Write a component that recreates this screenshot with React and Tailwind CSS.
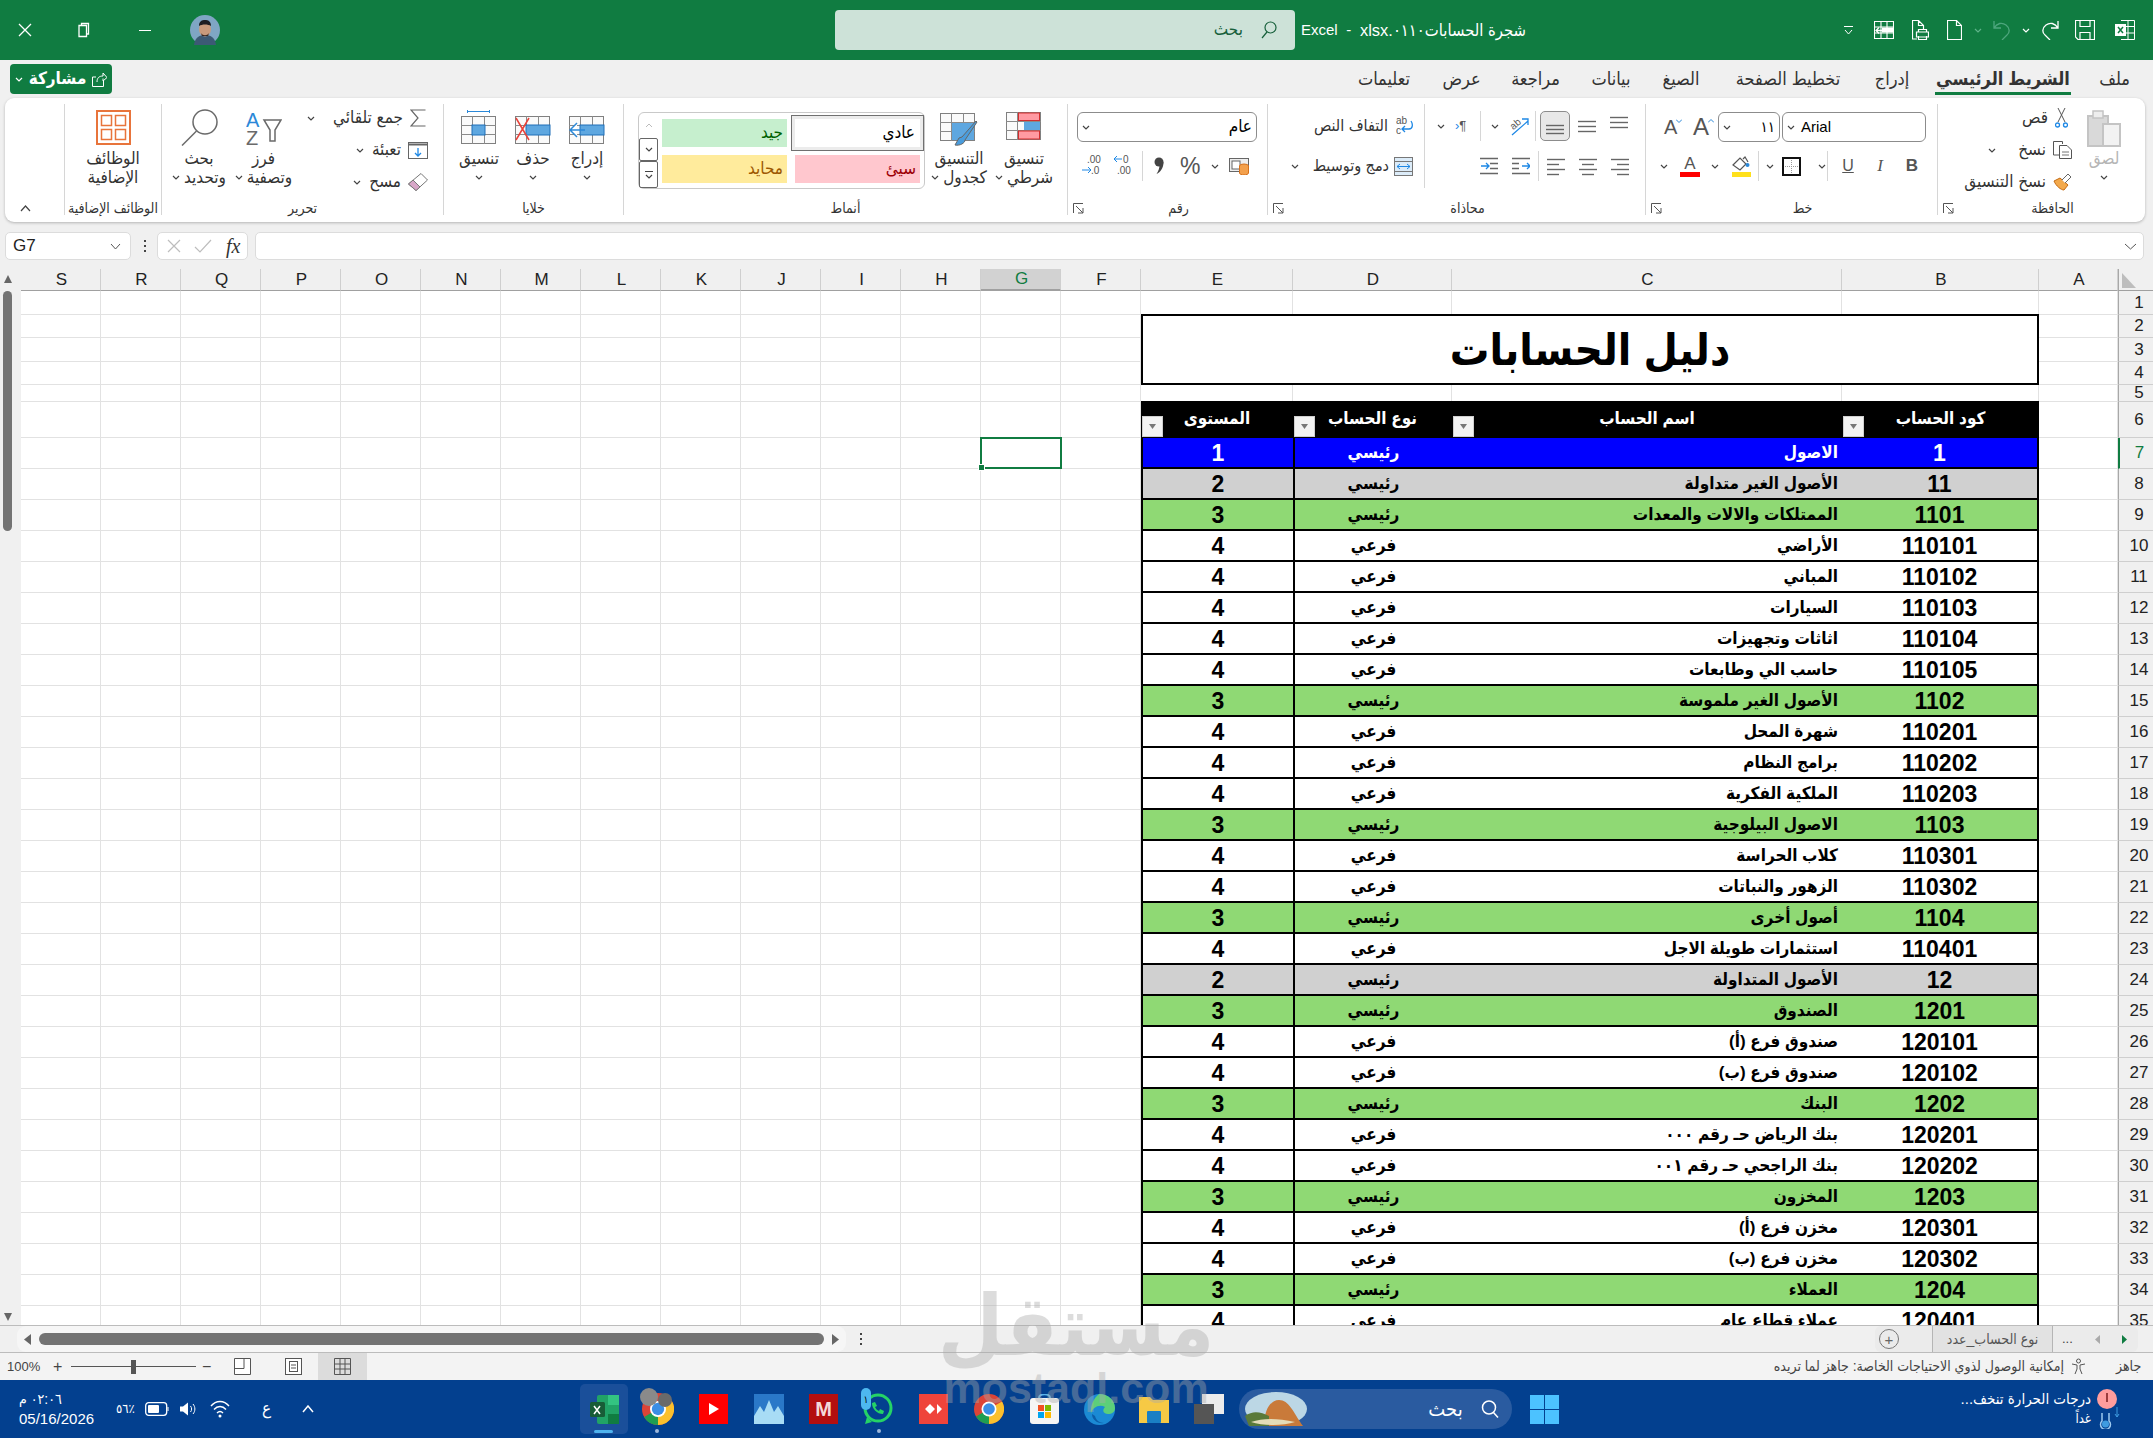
import React from "react";

const COLS = ["S", "R", "Q", "P", "O", "N", "M", "L", "K", "J", "I", "H", "G", "F", "E", "D", "C", "B", "A"];
const EMPTY = Array.from({ length: 14 }, (_, i) => i);

// type: b = blue, g = grey, m = green, s = plain
const ACCOUNTS = [
  ["1", "الاصول", "رئيسي", 1, "b"],
  ["11", "الأصول الغير متداولة", "رئيسي", 2, "g"],
  ["1101", "الممتلكات والالات والمعدات", "رئيسي", 3, "m"],
  ["110101", "الأراضي", "فرعي", 4, "s"],
  ["110102", "المباني", "فرعي", 4, "s"],
  ["110103", "السيارات", "فرعي", 4, "s"],
  ["110104", "اثاثات وتجهيزات", "فرعي", 4, "s"],
  ["110105", "حاسب الي وطابعات", "فرعي", 4, "s"],
  ["1102", "الأصول الغير ملموسة", "رئيسي", 3, "m"],
  ["110201", "شهرة المحل", "فرعي", 4, "s"],
  ["110202", "برامج النظام", "فرعي", 4, "s"],
  ["110203", "الملكية الفكرية", "فرعي", 4, "s"],
  ["1103", "الاصول البيلوجية", "رئيسي", 3, "m"],
  ["110301", "كلاب الحراسة", "فرعي", 4, "s"],
  ["110302", "الزهور والنباتات", "فرعي", 4, "s"],
  ["1104", "أصول أخرى", "رئيسي", 3, "m"],
  ["110401", "استثمارات طويلة الاجل", "فرعي", 4, "s"],
  ["12", "الأصول المتداولة", "رئيسي", 2, "g"],
  ["1201", "الصندوق", "رئيسي", 3, "m"],
  ["120101", "صندوق فرع (أ)", "فرعي", 4, "s"],
  ["120102", "صندوق فرع (ب)", "فرعي", 4, "s"],
  ["1202", "البنك", "رئيسي", 3, "m"],
  ["120201", "بنك الرياض حـ رقم ٠٠٠", "فرعي", 4, "s"],
  ["120202", "بنك الراجحي حـ رقم ٠٠١", "فرعي", 4, "s"],
  ["1203", "المخزون", "رئيسي", 3, "m"],
  ["120301", "مخزن فرع (أ)", "فرعي", 4, "s"],
  ["120302", "مخزن فرع (ب)", "فرعي", 4, "s"],
  ["1204", "العملاء", "رئيسي", 3, "m"],
  ["120401", "عملاء قطاع عام", "فرعي", 4, "s"],
];

const FILLS = {
  b: "bg-[#0000ff] text-white",
  g: "bg-[#d0d0d0] text-black",
  m: "bg-[#8fd974] text-black",
  s: "bg-white text-black",
};

const TABS = [
  ["تعليمات", "ml-[1246px] w-[52px]"],
  ["عرض", "ml-[33px] w-[37px]"],
  ["مراجعة", "ml-[32px] w-[47px]"],
  ["بيانات", "ml-[32px] w-[40px]"],
  ["الصيغ", "ml-[31px] w-[38px]"],
  ["تخطيط الصفحة", "ml-[36px] w-[104px]"],
  ["إدراج", "ml-[36px] w-[32px]"],
];

function Chev({ className = "", color = "#444" }) {
  return (
    <svg width="8" height="5" viewBox="0 0 8 5" className={`shrink-0 ${className}`}>
      <path d="M1 1l3 3 3-3" fill="none" stroke={color} strokeWidth="1.2" />
    </svg>
  );
}

function Launcher() {
  return (
    <svg width="11" height="11" viewBox="0 0 11 11" className="ml-[5px] mr-[6px] shrink-0">
      <path d="M.5 10V.5H10M3 3l7 7M10 5v5H5" fill="none" stroke="#555" />
    </svg>
  );
}

function Sep({ className = "" }) {
  return <div className={`h-[30px] w-px shrink-0 bg-[#d6d6d6] ${className}`} />;
}

function Group({ label, launcher, className = "", children }) {
  return (
    <div className={`flex h-[111px] shrink-0 flex-col border-l border-[#d6d6d6] ${className}`}>
      <div className="flex min-h-0 flex-1">{children}</div>
      <div className="flex h-[14px] items-center">
        {launcher && <Launcher />}
        <span dir="rtl" className="flex-1 text-center text-[14px] leading-[14px] whitespace-nowrap text-[#333]">
          {label}
        </span>
      </div>
    </div>
  );
}

function Big({ className = "", icon, l1, l2, chev }) {
  return (
    <div className={`flex shrink-0 flex-col items-center text-[17px] text-[#333] ${className}`}>
      <div className="flex h-[45px] items-center justify-center">{icon}</div>
      <div dir="rtl" className="h-[19px] leading-[19px] whitespace-nowrap">{l1}</div>
      <div className="flex h-[19px] items-center gap-[4px] whitespace-nowrap">
        {chev && <Chev />}
        {l2 && <span dir="rtl" className="leading-[19px]">{l2}</span>}
      </div>
    </div>
  );
}

function Small({ icon, text, chev, chevGap = "mr-[8px]" }) {
  return (
    <div className="flex h-[28px] items-center justify-end text-[17px] text-[#333]">
      {chev && <Chev className={chevGap} />}
      <span dir="rtl" className="whitespace-nowrap">{text}</span>
      <span className="ml-[7px] flex items-center">{icon}</span>
    </div>
  );
}

function SheetGrid({ children }) {
  return (
    <svg width="36" height="34" viewBox="0 0 36 34">
      <rect x=".5" y="6.5" width="34" height="27" fill="#fafafa" stroke="#808080" />
      <path d="M11.5 6v28M23.5 6v28M0 15.5h35M0 24.5h35" stroke="#8a8a8a" />
      {children}
    </svg>
  );
}

function Lines({ rows }) {
  return (
    <svg width="18" height="20" viewBox="0 0 18 20">
      {rows.map(([y, x1, x2]) => (
        <path key={y} d={`M${x1} ${y}.5H${x2}`} stroke="#666" strokeWidth="1.4" />
      ))}
    </svg>
  );
}

function Indent({ flip }) {
  return (
    <svg width="18" height="20" viewBox="0 0 18 20">
      <path d="M0 2.5h18M0 17.5h18" stroke="#666" strokeWidth="1.3" />
      <path d={flip ? "M0 7.5h7M0 12.5h7" : "M10 7.5h8M10 12.5h8"} stroke="#666" strokeWidth="1.3" />
      <path d={flip ? "M10 10h8m-3-3l3 3-3 3" : "M1 10h8m-3-3l3 3-3 3"} fill="none" stroke="#1e88e5" strokeWidth="1.3" />
    </svg>
  );
}

function Chrome({ size = 30 }) {
  return (
    <svg width={size} height={size} viewBox="0 0 30 30">
      <circle cx="15" cy="15" r="15" fill="#db4437" />
      <path d="M15 15L2 22.5A15 15 0 0 0 15 30z" fill="#1f9e51" />
      <path d="M15 15v15A15 15 0 0 0 28 7.500z" fill="#fbc02d" />
      <circle cx="15" cy="15" r="7.500" fill="#fff" />
      <circle cx="15" cy="15" r="5.800" fill="#3b8ee6" />
    </svg>
  );
}

function Header() {
  return (
    <div className="flex h-[60px] shrink-0 items-center bg-[#107c41] text-white">
      <svg width="14" height="14" viewBox="0 0 14 14" className="ml-[18px] shrink-0">
        <path d="M1 1l12 12M13 1L1 13" stroke="#fff" strokeWidth="1.3" />
      </svg>
      <svg width="12" height="16" viewBox="0 0 12 16" className="ml-[46px] shrink-0">
        <path d="M3.500 3V1.500h7V12H8.500M1 3.500h7.500v11H1z" fill="none" stroke="#fff" strokeWidth="1.3" />
      </svg>
      <div className="ml-[49px] h-px w-[12px] shrink-0 bg-white" />
      <svg width="30" height="30" viewBox="0 0 30 30" className="ml-[39px] shrink-0">
        <circle cx="15" cy="15" r="15" fill="#7fa6c4" />
        <path d="M4 30c1-8 6-10 11-10s10 2 11 10z" fill="#3c5a75" />
        <ellipse cx="15" cy="14" rx="6" ry="7.500" fill="#c89a7c" />
        <path d="M9 11c0-5 3-6 6-6s6 1 6 6c-3-2-9-2-12 0z" fill="#1d1d22" />
        <path d="M11 18c2 3 6 3 8 0l-1 3h-6z" fill="#3a2a24" />
      </svg>
      <div className="ml-[615px] flex h-[40px] w-[460px] shrink-0 items-center justify-end rounded-[4px] bg-[#cde2d8] text-[#17603b]">
        <span dir="rtl" className="text-[17px]">بحث</span>
        <svg width="17" height="18" viewBox="0 0 17 18" className="ml-[17px] mr-[18px]">
          <circle cx="10.500" cy="6.500" r="5.500" fill="none" stroke="#17603b" strokeWidth="1.2" />
          <path d="M7 11l-5 6" stroke="#17603b" strokeWidth="1.2" />
        </svg>
      </div>
      <div className="ml-[6px] flex w-[225px] shrink-0 items-center justify-between text-[15px] whitespace-nowrap">
        <span>Excel</span>
        <span>-</span>
        <span className="flex text-[16.5px]">
          <span>xlsx.٠١١٠</span>
          <span dir="rtl">شجرة الحسابات</span>
        </span>
      </div>
      <svg width="9" height="9" viewBox="0 0 9 9" className="ml-[318px] shrink-0">
        <path d="M0 .5h9M1 4l3.500 4L8 4" fill="none" stroke="#fff" />
      </svg>
      <svg width="20" height="18" viewBox="0 0 20 18" className="ml-[21px] shrink-0">
        <path d="M.5.5h19v17H.5zM.5 6h19M.5 12h19M7 .5v17M13 .5v17" fill="none" stroke="#fff" strokeWidth="1.1" />
        <rect x="8" y="6.500" width="12" height="5" fill="#fff" />
        <path d="M9 9.500H2m3-3l-3 3 3 3" fill="none" stroke="#fff" strokeWidth="1.3" />
      </svg>
      <svg width="17" height="20" viewBox="0 0 17 20" className="ml-[18px] shrink-0">
        <path d="M5 19H.5V.5h6l5 5v4M6.500.5v5h5M4.500 12h12v5h-12zM6.500 12V9.500h8V12M6.500 16v3.500h8V16" fill="none" stroke="#fff" strokeWidth="1.2" />
      </svg>
      <svg width="15" height="20" viewBox="0 0 15 20" className="ml-[18px] shrink-0">
        <path d="M.5.5h9l5 5v14H.5zM9.500.5v5h5" fill="none" stroke="#fff" strokeWidth="1.2" />
      </svg>
      <Chev className="ml-[12px]" color="#5fb38a" />
      <svg width="18" height="20" viewBox="0 0 18 20" className="ml-[11px] shrink-0">
        <path d="M1 1v7h7M1 8c3-5 8-6 12-3 4 3 4 8 1 10l-5 5" fill="none" stroke="#4da67d" strokeWidth="1.3" />
      </svg>
      <Chev className="ml-[11px]" color="#fff" />
      <svg width="17" height="20" viewBox="0 0 17 20" className="ml-[12px] shrink-0">
        <path d="M16 1v7H9M16 8C13 3 8 2 4 5 0 8 0 13 3 15l5 5" fill="none" stroke="#fff" strokeWidth="1.3" />
      </svg>
      <svg width="20" height="20" viewBox="0 0 20 20" className="ml-[16px] shrink-0">
        <path d="M.5.500h19v19H3L.5 17zM5 .5v6h10v-6M5 19.500v-7h10v7" fill="none" stroke="#fff" strokeWidth="1.2" />
      </svg>
      <svg width="20" height="20" viewBox="0 0 20 20" className="ml-[20px] shrink-0">
        <path d="M6 .5h13.500v19H6M6 6.500h13.500M6 13h13.500M13 .5v19" fill="none" stroke="#fff" />
        <rect y="4" width="11" height="12" fill="#fff" />
        <path d="M3 7l5 6M8 7l-5 6" stroke="#107c41" strokeWidth="1.5" />
      </svg>
    </div>
  );
}

function TabRow() {
  return (
    <div className="flex h-[38px] shrink-0 items-center text-[18px] text-[#333]">
      <div className="ml-[10px] flex h-[30px] w-[102px] shrink-0 items-center justify-center gap-[6px] rounded-[4px] bg-[#107c41] text-white">
        <Chev color="#fff" />
        <span dir="rtl" className="text-[17px] font-bold">مشاركة</span>
        <svg width="15" height="15" viewBox="0 0 15 15">
          <path d="M4 5H.500v9.500h11V9M5 10c0-4 2-6 6-6V1l4 4.500L11 9V6.500" fill="none" stroke="#fff" />
        </svg>
      </div>
      {TABS.map(([t, c]) => (
        <span key={t} dir="rtl" className={`flex shrink-0 justify-center whitespace-nowrap ${c}`}>{t}</span>
      ))}
      <div className="relative ml-[27px] flex h-[38px] w-[136px] shrink-0 items-center justify-center font-bold">
        <span dir="rtl" className="whitespace-nowrap">الشريط الرئيسي</span>
        <div className="absolute right-0 bottom-[3px] left-0 h-[3px] bg-[#107c41]" />
      </div>
      <span dir="rtl" className="ml-[30px] w-[29px] shrink-0 text-center">ملف</span>
    </div>
  );
}

function Ribbon() {
  return (
    <div className="mx-[5px] flex h-[124px] w-[2140px] shrink-0 rounded-[9px] bg-white pt-[6px] shadow-[0_1px_3px_rgba(0,0,0,0.25)]">
      <div className="flex h-[111px] w-[59px] shrink-0 flex-col justify-end pb-[3px] pl-[15px]">
        <svg width="11" height="7" viewBox="0 0 11 7"><path d="M1 6l4.500-5L10 6" fill="none" stroke="#444" strokeWidth="1.200" /></svg>
      </div>

      <Group label="الوظائف الإضافية" className="w-[97px]">
        <Big
          className="w-full"
          l1="الوظائف"
          l2="الإضافية"
          icon={
            <svg width="35" height="35" viewBox="0 0 35 35" className="mt-[2px]">
              <rect x="1" y="1" width="33" height="33" fill="none" stroke="#e8743b" strokeWidth="2" />
              <path d="M5.500 5.500h10v10h-10zM19.500 5.500h10v10h-10zM5.500 19.500h10v10h-10zM19.500 19.500h10v10h-10z" fill="none" stroke="#e8743b" strokeWidth="1.500" />
            </svg>
          }
        />
      </Group>

      <Group label="تحرير" className="w-[282px]">
        <div className="flex w-full">
          <Big
            className="ml-[2px] w-[70px]"
            l1="بحث"
            l2="وتحديد"
            chev
            icon={
              <svg width="37" height="37" viewBox="0 0 37 37" className="mt-[2px]">
                <circle cx="24" cy="13" r="12" fill="none" stroke="#6a6a6a" strokeWidth="1.500" />
                <path d="M15.500 22L1 36.500" stroke="#6a6a6a" strokeWidth="1.500" />
              </svg>
            }
          />
          <Big
            className="w-[59px]"
            l1="فرز"
            l2="وتصفية"
            chev
            icon={
              <svg width="36" height="40" viewBox="0 0 36 40" className="mt-[6px]">
                <text x="0" y="17" fontSize="20" fill="#2b88d8" fontFamily="Liberation Sans">A</text>
                <text x="0" y="35" fontSize="20" fill="#6a6a6a" fontFamily="Liberation Sans">Z</text>
                <path d="M18 10h17l-6 10v11h-5V20z" fill="none" stroke="#6a6a6a" strokeWidth="1.500" />
              </svg>
            }
          />
          <div className="ml-[3px] flex w-[132px] flex-col gap-[4px]">
            <Small
              text="جمع تلقائي"
              chev
              chevGap="mr-[18px]"
              icon={
                <svg width="16" height="18" viewBox="0 0 16 18" className="mr-[2px]">
                  <path d="M15.500 1H1l7 8-7 8h14.500" fill="none" stroke="#666" strokeWidth="1.200" />
                </svg>
              }
            />
            <Small
              text="تعبئة"
              chev
              icon={
                <svg width="20" height="17" viewBox="0 0 20 17">
                  <rect x=".5" y=".5" width="19" height="16" fill="#fff" stroke="#666" />
                  <path d="M0 2.500h20" stroke="#666" strokeWidth="2" />
                  <path d="M10 6v8m-3-3l3 3 3-3" fill="none" stroke="#1e88e5" strokeWidth="1.300" />
                </svg>
              }
            />
            <Small
              text="مسح"
              chev
              icon={
                <svg width="20" height="18" viewBox="0 0 20 18">
                  <path d="M13 .5L19.500 7 8 17.500 .5 11z" fill="#fff" stroke="#777" />
                  <path d="M5 7l7 7-4 3.500L.5 11z" fill="#d7a7c8" stroke="#777" />
                </svg>
              }
            />
          </div>
        </div>
      </Group>

      <Group label="خلايا" className="w-[180px]">
        <div className="flex pl-[8px]">
          <Big
            className="w-[54px]"
            l1="تنسيق"
            chev
            icon={
              <SheetGrid>
                <path d="M6.500 0v3M28.500 0v3M6.500 1.500h22" stroke="#2b88d8" />
                <rect x="11" y="15" width="13" height="10" fill="#5ea7e0" stroke="#1e6fb8" />
              </SheetGrid>
            }
          />
          <Big
            className="w-[54px]"
            l1="حذف"
            chev
            icon={
              <SheetGrid>
                <rect x="11" y="15" width="24" height="10" fill="#5ea7e0" stroke="#1e6fb8" />
                <path d="M1 8l13 22M14 8L1 30" stroke="#e8423a" strokeWidth="1.500" />
              </SheetGrid>
            }
          />
          <Big
            className="w-[54px]"
            l1="إدراج"
            chev
            icon={
              <SheetGrid>
                <rect x="11" y="15" width="24" height="10" fill="#5ea7e0" stroke="#1e6fb8" />
                <path d="M16 20H1m7-7l-7 7 7 7" fill="#fff" stroke="#2b88d8" strokeWidth="1.500" />
              </SheetGrid>
            }
          />
        </div>
      </Group>

      <Group label="أنماط" className="w-[444px]">
        <div className="flex pl-[14px]">
          <div className="mt-[8px] flex h-[77px] w-[287px] shrink-0 rounded-[6px] border border-[#c9c9c9]">
            <div className="flex w-[19px] shrink-0 flex-col items-center">
              <div className="flex h-[25px] w-full items-center justify-center">
                <svg width="8" height="5" viewBox="0 0 8 5"><path d="M1 4l3-3 3 3" fill="none" stroke="#bbb" /></svg>
              </div>
              <div className="flex h-[24px] w-full items-center justify-center rounded-[2px] border border-[#666]">
                <Chev />
              </div>
              <div className="flex h-[27px] w-full flex-col items-center justify-center gap-[2px] rounded-[2px] border border-[#666]">
                <div className="h-px w-[8px] bg-[#444]" />
                <Chev />
              </div>
            </div>
            <div dir="ltr" className="ml-[4px] mt-[6px] grid h-[64px] grid-cols-[125px_125px] grid-rows-[28px_28px] gap-x-[8px] gap-y-[8px] text-[17px]">
              <div dir="rtl" className="flex items-center bg-[#c6efce] pr-[4px] text-[#006100]">جيد</div>
              <div dir="rtl" className="-m-[4px] flex items-center border border-[#707070] bg-white pr-[8px] text-black shadow-[inset_0_0_0_3px_#ececec]">عادي</div>
              <div dir="rtl" className="flex items-center bg-[#ffeb9c] pr-[4px] text-[#9c5700]">محايد</div>
              <div dir="rtl" className="flex items-center bg-[#ffc7ce] pr-[4px] text-[#9c0006]">سيئ</div>
            </div>
          </div>
          <Big
            className="ml-[4px] w-[60px]"
            l1="التنسيق"
            l2="كجدول"
            chev
            icon={
              <svg width="38" height="33" viewBox="0 0 38 33" className="mt-[5px]">
                <rect x=".5" y=".5" width="34" height="27" fill="#fafafa" stroke="#808080" />
                <path d="M11.500 0v28M23.500 0v28M0 9.500h35M0 18.500h35" stroke="#8a8a8a" />
                <rect x="12" y="10" width="22" height="17" fill="#5ea7e0" />
                <path d="M36 8L22 24l-3 1-4 7c5 1 10-2 10-5l12-18z" fill="#4a9cdc" stroke="#666" />
              </svg>
            }
          />
          <Big
            className="w-[70px]"
            l1="تنسيق"
            l2="شرطي"
            chev
            icon={
              <svg width="36" height="28" viewBox="0 0 36 28" className="mt-[-2px]">
                <rect x=".5" y=".5" width="34" height="27" fill="#fafafa" stroke="#808080" />
                <path d="M11.500 0v28M23.500 0v28M0 9.500h35M0 18.500h35" stroke="#8a8a8a" />
                <rect x="12.500" y="1" width="21" height="7.500" fill="#ff9aa2" stroke="#d32f2f" />
                <rect x="18" y="10" width="16" height="8" fill="#5ea7e0" />
                <rect x="12.500" y="19" width="21" height="8" fill="#ff9aa2" stroke="#d32f2f" />
              </svg>
            }
          />
        </div>
      </Group>

      <Group label="رقم" launcher className="w-[200px]">
        <div className="flex w-full flex-col pt-[8px] pl-[9px]">
          <div className="flex h-[30px] w-[180px] items-center justify-between rounded-[6px] border border-[#8c8c8c] px-[4px] text-[17px]">
            <Chev />
            <span dir="rtl">عام</span>
          </div>
          <div className="mt-[9px] flex h-[30px] items-center text-[#555]">
            <svg width="20" height="22" viewBox="0 0 20 22" className="ml-[5px] shrink-0">
              <text x="5" y="8" fontSize="10" fill="#555" fontFamily="Liberation Sans">.00</text>
              <text x="9" y="19" fontSize="10" fill="#555" fontFamily="Liberation Sans">.0</text>
              <path d="M0 15h9m-3-3l3 3-3 3" fill="none" stroke="#1e88e5" />
            </svg>
            <svg width="21" height="22" viewBox="0 0 21 22" className="ml-[12px] shrink-0">
              <text x="9" y="8" fontSize="10" fill="#555" fontFamily="Liberation Sans">0</text>
              <text x="3" y="19" fontSize="10" fill="#555" fontFamily="Liberation Sans">.00</text>
              <path d="M8 4H0m3-3L0 4l3 3" fill="none" stroke="#1e88e5" />
            </svg>
            <Sep className="ml-[7px]" />
            <svg width="10" height="18" viewBox="0 0 10 18" className="ml-[11px] shrink-0">
              <circle cx="5" cy="5" r="4.500" fill="#444" />
              <path d="M9.500 5c0 6-3 10-7 12 2-3 3-6 3-9z" fill="#444" />
            </svg>
            <span className="ml-[16px] w-[18px] text-center text-[23px] leading-[20px]">%</span>
            <Chev className="ml-[13px]" />
            <svg width="20" height="17" viewBox="0 0 20 17" className="ml-[10px] shrink-0">
              <rect x=".5" y=".5" width="19" height="13" fill="#eee" stroke="#666" />
              <rect x="3" y="3" width="8" height="8" fill="#fff" stroke="#666" />
              <ellipse cx="15" cy="8" rx="4.500" ry="2" fill="#f3a04c" stroke="#d6701a" />
              <path d="M10.500 8v7c0 2.500 9 2.500 9 0V8" fill="#f3a04c" stroke="#d6701a" />
            </svg>
          </div>
        </div>
      </Group>

      <Group label="محاذاة" launcher className="w-[378px]">
        <div className="flex w-full">
          <div className="flex h-[84px] w-[157px] shrink-0 flex-col gap-[10px] border-r border-[#d6d6d6] pt-[7px] pr-[11px] text-[16px] text-[#333]">
            <div className="flex h-[30px] items-center justify-end">
              <span dir="rtl" className="whitespace-nowrap">التفاف النص</span>
              <svg width="17" height="22" viewBox="0 0 17 22" className="ml-[8px] shrink-0">
                <text x="0" y="9" fontSize="10" fill="#555" fontFamily="Liberation Sans">ab</text>
                <text x="0" y="19" fontSize="10" fill="#555" fontFamily="Liberation Sans">c</text>
                <path d="M15 6c2 3 2 8-2 8H6m3-3l-3 3 3 3" fill="none" stroke="#1e88e5" strokeWidth="1.300" />
              </svg>
            </div>
            <div className="flex h-[30px] items-center justify-end">
              <Chev className="mr-[14px]" />
              <span dir="rtl" className="whitespace-nowrap">دمج وتوسيط</span>
              <svg width="19" height="19" viewBox="0 0 19 19" className="ml-[5px] shrink-0">
                <rect x=".5" y=".5" width="18" height="18" fill="#dcecf9" stroke="#777" />
                <path d="M0 4.500h19M0 14.500h19" stroke="#777" />
                <path d="M3 9.500h13M6 7L3 9.500 6 12M13 7l3 2.500-3 2.500" fill="none" stroke="#1e88e5" />
              </svg>
            </div>
          </div>
          <div className="flex flex-col gap-[10px] pt-[7px]">
            <div className="flex h-[30px] items-center">
              <Chev className="ml-[12px]" />
              <span className="ml-[10px] w-[15px] text-[13px] leading-[20px] text-[#555]"><span className="text-[#1e88e5]">›</span>¶</span>
              <Sep className="ml-[10px]" />
              <Chev className="ml-[10px]" />
              <svg width="20" height="20" viewBox="0 0 20 20" className="ml-[10px] shrink-0 overflow-visible">
                <text x="1" y="11" fontSize="10" fill="#555" fontFamily="Liberation Sans" transform="rotate(-40 7 8)">ab</text>
                <path d="M3 19L19 5M13 3h6v6" fill="none" stroke="#1e88e5" strokeWidth="1.300" />
              </svg>
              <Sep className="ml-[6px]" />
              <div className="ml-[4px] flex h-[30px] w-[30px] shrink-0 items-center justify-center rounded-[5px] border border-[#8c8c8c] bg-[#e8e8e8]">
                <Lines rows={[[9, 0, 18], [13, 0, 18], [17, 0, 18]]} />
              </div>
              <span className="ml-[8px]"><Lines rows={[[5, 0, 18], [10, 0, 18], [15, 0, 18]]} /></span>
              <span className="ml-[14px]"><Lines rows={[[1, 0, 18], [6, 0, 18], [11, 0, 18]]} /></span>
            </div>
            <div className="flex h-[30px] items-center">
              <span className="ml-[55px]"><Indent /></span>
              <span className="ml-[14px]"><Indent flip /></span>
              <Sep className="ml-[8px]" />
              <span className="ml-[8px]"><Lines rows={[[3, 0, 18], [8, 0, 12], [13, 0, 18], [18, 0, 12]]} /></span>
              <span className="ml-[14px]"><Lines rows={[[3, 0, 18], [8, 3, 15], [13, 0, 18], [18, 3, 15]]} /></span>
              <span className="ml-[14px]"><Lines rows={[[3, 0, 18], [8, 6, 18], [13, 0, 18], [18, 6, 18]]} /></span>
            </div>
          </div>
        </div>
      </Group>

      <Group label="خط" launcher className="w-[292px]">
        <div className="flex w-full flex-col gap-[9px] pt-[8px] text-[#555]">
          <div className="flex h-[30px] items-center">
            <span className="ml-[18px] w-[12px] text-[20px] leading-[20px]">A</span>
            <svg width="6" height="4" viewBox="0 0 6 4" className="mb-[12px]"><path d="M0 .5l3 3 3-3" fill="none" stroke="#2b88d8" /></svg>
            <span className="ml-[11px] w-[15px] text-[24px] leading-[24px]">A</span>
            <svg width="6" height="4" viewBox="0 0 6 4" className="mb-[12px]"><path d="M0 3.500l3-3 3 3" fill="none" stroke="#2b88d8" /></svg>
            <div className="ml-[4px] flex h-[30px] w-[62px] shrink-0 items-center justify-between rounded-[6px] border border-[#8c8c8c] px-[4px] text-[15px] text-black">
              <Chev />
              <span>١١</span>
            </div>
            <div className="ml-[2px] flex h-[30px] w-[144px] shrink-0 items-center rounded-[6px] border border-[#8c8c8c] px-[4px] text-[15px] text-black">
              <Chev />
              <span className="ml-[6px]">Arial</span>
            </div>
          </div>
          <div className="flex h-[30px] items-center">
            <Chev className="ml-[14px]" />
            <div className="ml-[12px] flex w-[20px] shrink-0 flex-col items-center">
              <span className="text-[17px] leading-[15px]">A</span>
              <div className="mt-[1px] h-[5px] w-[20px] bg-[#ff0000]" />
            </div>
            <Chev className="ml-[11px]" />
            <svg width="19" height="21" viewBox="0 0 19 21" className="ml-[13px] shrink-0">
              <path d="M1 9l7-7 6 6-6 6zM11 3l2-2 3 5" fill="none" stroke="#555" strokeWidth="1.200" />
              <circle cx="15.500" cy="9" r="2" fill="#2b88d8" />
              <rect y="16" width="19" height="5" fill="#ffe01b" />
            </svg>
            <Sep className="ml-[7px]" />
            <Chev className="ml-[7px]" />
            <svg width="19" height="19" viewBox="0 0 19 19" className="ml-[8px] shrink-0">
              <rect x="1" y="1" width="17" height="17" fill="#fff" stroke="#111" strokeWidth="2" />
              <path d="M9.500 3v13M3 9.500h13" stroke="#999" strokeDasharray="1 1" />
            </svg>
            <Chev className="ml-[17px]" />
            <Sep className="ml-[1px]" />
            <span className="ml-[13px] w-[14px] text-center text-[16px] underline">U</span>
            <span className="ml-[18px] w-[14px] text-center text-[17px] italic [font-family:'Liberation_Serif',serif]">I</span>
            <span className="ml-[18px] w-[14px] text-center text-[17px] font-bold">B</span>
          </div>
        </div>
      </Group>

      <Group label="الحافظة" launcher className="w-[208px]">
        <div className="flex w-full">
          <div className="flex w-[134px] shrink-0 flex-col gap-[4px]">
            <Small
              text="قص"
              icon={
                <svg width="13" height="20" viewBox="0 0 13 20" className="mr-[4px]">
                  <path d="M3 14L10 0M10 14L3 0" stroke="#555" />
                  <circle cx="2.500" cy="17" r="2" fill="none" stroke="#1e88e5" strokeWidth="1.300" />
                  <circle cx="10.500" cy="17" r="2" fill="none" stroke="#1e88e5" strokeWidth="1.300" />
                </svg>
              }
            />
            <Small
              text="نسخ"
              chev
              chevGap="mr-[22px]"
              icon={
                <svg width="19" height="18" viewBox="0 0 19 18">
                  <path d="M6 14H.5V.5h9v2.500M6.500 4.500H14l4.500 4.500v8.500h-12z" fill="#fff" stroke="#555" />
                  <path d="M9 11h7M9 14h7" stroke="#777" />
                </svg>
              }
            />
            <Small
              text="نسخ التنسيق"
              icon={
                <svg width="19" height="18" viewBox="0 0 19 18">
                  <path d="M1 8l6-3 8 7-4 5c-3 0-8-4-10-9z" fill="#f3a94c" stroke="#c46a12" />
                  <path d="M9 7l6-6 3 3-6 6" fill="#fff" stroke="#666" />
                </svg>
              }
            />
          </div>
          <Big
            className="w-[64px] text-[#b5b5b5]"
            l1="لصق"
            chev
            icon={
              <svg width="34" height="37" viewBox="0 0 34 37" className="mt-[4px]">
                <path d="M1 6h20v30H1z" fill="#d9d9d9" stroke="#c4c4c4" strokeWidth="2" />
                <rect x="6" y="1" width="10" height="7" fill="#eee" stroke="#c4c4c4" strokeWidth="1.500" />
                <rect x="16" y="14" width="17" height="22" fill="#f2f2f2" stroke="#c4c4c4" strokeWidth="2" />
              </svg>
            }
          />
        </div>
      </Group>
    </div>
  );
}

function FormulaBar() {
  return (
    <div className="flex h-[47px] shrink-0 items-start pt-[10px] pl-[5px]">
      <div className="flex h-[28px] w-[126px] shrink-0 items-center justify-between rounded-[5px] border border-[#dcdcdc] bg-white pr-[9px] pl-[7px] text-[17px] text-[#222]">
        <span>G7</span>
        <svg width="11" height="7" viewBox="0 0 11 7"><path d="M1 1l4.500 5L10 1" fill="none" stroke="#555" /></svg>
      </div>
      <div className="ml-[13px] flex h-[28px] w-[2px] shrink-0 flex-col items-center justify-center gap-[3px]">
        <div className="h-[2px] w-[2px] bg-[#444]" />
        <div className="h-[2px] w-[2px] bg-[#444]" />
        <div className="h-[2px] w-[2px] bg-[#444]" />
      </div>
      <div className="ml-[11px] flex h-[28px] w-[91px] shrink-0 items-center rounded-[5px] border border-[#dcdcdc] bg-white pl-[9px]">
        <svg width="14" height="14" viewBox="0 0 14 14"><path d="M1 1l12 12M13 1L1 13" stroke="#bdbdbd" strokeWidth="1.200" /></svg>
        <svg width="18" height="14" viewBox="0 0 18 14" className="ml-[13px]"><path d="M1 8l5 5L17 1" fill="none" stroke="#bdbdbd" strokeWidth="1.200" /></svg>
        <span className="ml-[14px] text-[20px] italic [font-family:'Liberation_Serif',serif] text-[#333]">fx</span>
      </div>
      <div className="ml-[7px] flex h-[28px] w-[1889px] shrink-0 items-center justify-end rounded-[5px] border border-[#dcdcdc] bg-white pr-[6px]">
        <svg width="13" height="7" viewBox="0 0 13 7"><path d="M1 1l5.500 5L12 1" fill="none" stroke="#555" /></svg>
      </div>
    </div>
  );
}

function RowNum({ n, active }) {
  return (
    <div className={`flex items-center justify-center border-b border-[#cfcfcf] bg-[#f0f0f0] pl-[6px] text-[17px] ${active ? "border-l-2 border-l-[#107c41] bg-[#e1e1e1] text-[#107c41]" : "border-l border-l-[#a8a8a8] text-[#222]"}`}>
      {n}
    </div>
  );
}

const Blank = () => <div className="border-r border-b border-[#e2e2e2] bg-white" />;

function Blanks({ selected }) {
  return EMPTY.map((i) =>
    selected && i === 12 ? (
      <div key={i} className="relative z-10 -mx-px -mt-px border-2 border-[#107c41] bg-white">
        <div className="absolute -bottom-[4px] -left-[4px] h-[7px] w-[7px] border border-white bg-[#107c41]" />
      </div>
    ) : (
      <Blank key={i} />
    )
  );
}

function FilterHead({ children }) {
  return (
    <div className="relative -mt-px flex items-center justify-center bg-black text-[17px] font-bold text-white">
      <span dir="rtl" className="pb-[1px] whitespace-nowrap">{children}</span>
      <div className="absolute bottom-[1px] left-[1px] flex h-[21px] w-[21px] items-center justify-center border border-[#cfcfcf] bg-[#f3f3f3]">
        <svg width="7" height="5" viewBox="0 0 7 5"><path d="M0 0h7L3.500 5z" fill="#777" /></svg>
      </div>
    </div>
  );
}

function Sheet() {
  return (
    <div className="grid h-[1056px] flex-1 grid-cols-[repeat(14,80px)_152px_159px_390px_197px_79px_35px] grid-rows-[22px_24px_23px_24px_23px_17px_36px_repeat(29,31px)] overflow-hidden text-[17px]">
      {COLS.map((c) => (
        <div key={c} className={`flex items-center justify-center border-r border-b pl-[2px] border-r-[#cfcfcf] border-b-[#a0a0a0] ${c === "G" ? "border-b-2 border-b-[#107c41] bg-[#d2d2d2] text-[#107c41]" : "bg-[#f0f0f0] text-[#222]"}`}>
          {c}
        </div>
      ))}
      <div className="flex items-end justify-start border-b border-l border-b-[#a0a0a0] border-l-[#a8a8a8] bg-[#f0f0f0] pb-[2px] pl-[3px]">
        <svg width="14" height="15" viewBox="0 0 14 15"><path d="M0 0l14 15H0z" fill="#bdbdbd" /></svg>
      </div>

      {[1, 2, 3, 4, 5, 6].map((r) => (
        <React.Fragment key={r}>
          <Blanks />
          {r === 1 || r === 5 ? (
            <>
              <Blank />
              <Blank />
              <Blank />
              <Blank />
            </>
          ) : null}
          {r === 2 && (
            <div className="col-span-4 row-span-3 -mt-px flex items-center justify-center border-2 border-black bg-white">
              <span dir="rtl" className="text-[44px] leading-[40px] font-bold text-black">دليل الحسابات</span>
            </div>
          )}
          {r === 6 && (
            <>
              <FilterHead>المستوى</FilterHead>
              <FilterHead>نوع الحساب</FilterHead>
              <FilterHead>اسم الحساب</FilterHead>
              <FilterHead>كود الحساب</FilterHead>
            </>
          )}
          <Blank />
          <RowNum n={r} />
        </React.Fragment>
      ))}

      {ACCOUNTS.map(([code, name, kind, level, type], i) => (
        <React.Fragment key={code}>
          <Blanks selected={i === 0} />
          <div className={`flex items-center justify-center border-b-2 border-l-2 border-black pt-[1px] text-[23px] font-bold ${FILLS[type]}`}>{level}</div>
          <div dir="rtl" className={`flex items-center justify-center border-b-2 border-l-2 border-black pt-[1px] text-[17px] font-bold ${FILLS[type]}`}>{kind}</div>
          <div dir="rtl" className={`flex items-center justify-start border-b-2 border-black pt-[1px] pr-[4px] text-[17px] font-bold whitespace-nowrap ${FILLS[type]}`}>{name}</div>
          <div className={`flex items-center justify-center border-r-2 border-b-2 border-black pt-[1px] text-[23px] font-bold ${FILLS[type]}`}>{code}</div>
          <Blank />
          <RowNum n={i + 7} active={i === 0} />
        </React.Fragment>
      ))}
    </div>
  );
}

function VScroll() {
  return (
    <div className="flex w-[21px] shrink-0 flex-col items-start bg-[#f0f0f0] pl-[3px]">
      <svg width="10" height="10" viewBox="0 0 10 10" className="mt-[5px]"><path d="M5 1l4 8H1z" fill="#666" /></svg>
      <div className="mt-[7px] h-[240px] w-[9px] rounded-[5px] bg-[#737373]" />
      <svg width="10" height="10" viewBox="0 0 10 10" className="mt-auto mb-[3px]"><path d="M5 9l4-8H1z" fill="#666" /></svg>
    </div>
  );
}

function TabsBar() {
  return (
    <div className="flex h-[28px] shrink-0 items-center border-t border-b border-[#bcbcbc] bg-[#f0f0f0]">
      <div className="ml-[17px] flex h-[26px] w-[829px] shrink-0 items-center rounded-[9px] bg-[#f6f6f6] pl-[7px]">
        <svg width="7" height="11" viewBox="0 0 7 11"><path d="M7 0v11L0 5.500z" fill="#666" /></svg>
        <div className="ml-[8px] h-[12px] w-[785px] rounded-[6px] bg-[#737373]" />
        <svg width="7" height="11" viewBox="0 0 7 11" className="ml-[8px]"><path d="M0 0v11l7-5.500z" fill="#666" /></svg>
      </div>
      <div className="ml-[14px] flex flex-col gap-[3px]">
        <div className="h-[2px] w-[2px] bg-[#444]" />
        <div className="h-[2px] w-[2px] bg-[#444]" />
        <div className="h-[2px] w-[2px] bg-[#444]" />
      </div>
      <div className="ml-[1013px] flex h-[26px] w-[263px] shrink-0 items-center rounded-[6px] bg-[#ebebeb]">
        <div className="ml-[4px] flex h-[20px] w-[20px] shrink-0 items-center justify-center rounded-full border border-[#777] text-[15px] leading-none text-[#666]">+</div>
        <div className="ml-[33px] flex h-[26px] w-[121px] shrink-0 items-center justify-center border-r border-l border-[#b5b5b5] bg-[#e2e2e2] text-[14px] text-[#555]">
          <span dir="rtl">نوع الحساب_عدد</span>
        </div>
        <span className="ml-[9px] text-[13px] text-[#444]">...</span>
        <svg width="5" height="9" viewBox="0 0 5 9" className="ml-[22px]"><path d="M5 0v9L0 4.500z" fill="#aaa" /></svg>
        <svg width="5" height="9" viewBox="0 0 5 9" className="ml-[22px]"><path d="M0 0v9l5-4.500z" fill="#107c41" /></svg>
      </div>
    </div>
  );
}

function StatusBar() {
  return (
    <div className="flex h-[27px] shrink-0 items-center bg-[#f3f3f3] text-[14px] text-[#444]">
      <span className="ml-[7px] w-[36px] shrink-0 text-[13px]">100%</span>
      <span className="ml-[10px] w-[10px] text-[16px] leading-none">+</span>
      <div className="relative ml-[8px] flex h-[14px] w-[125px] shrink-0 items-center">
        <div className="h-px w-full bg-[#555]" />
        <div className="absolute top-0 left-[60px] h-[14px] w-[5px] bg-[#555]" />
      </div>
      <span className="ml-[6px] w-[10px] text-[16px] leading-none">−</span>
      <svg width="17" height="17" viewBox="0 0 17 17" className="ml-[22px] shrink-0">
        <path d="M.5.500h16v16H.5zM10 .5v10H.5" fill="#fff" stroke="#555" />
      </svg>
      <svg width="17" height="17" viewBox="0 0 17 17" className="ml-[34px] shrink-0">
        <rect x=".5" y=".5" width="16" height="16" fill="#fff" stroke="#555" />
        <rect x="4.500" y="3.500" width="8" height="10" fill="#fff" stroke="#555" />
        <path d="M6 7h5M6 10h5" stroke="#555" />
      </svg>
      <div className="ml-[16px] flex h-[27px] w-[49px] shrink-0 items-center justify-center bg-[#dcdcdc]">
        <svg width="17" height="17" viewBox="0 0 17 17">
          <path d="M.5.500h16v16H.5zM6 .5v16M11 .5v16M.5 6h16M.5 11h16" fill="none" stroke="#555" />
        </svg>
      </div>
      <span dir="rtl" className="ml-[1399px] w-[298px] shrink-0 text-right whitespace-nowrap">إمكانية الوصول لذوي الاحتياجات الخاصة: جاهز لما تريده</span>
      <svg width="15" height="17" viewBox="0 0 15 17" className="ml-[7px] shrink-0">
        <path d="M7.500 1a2 2 0 1 1 0 4 2 2 0 1 1 0-4zM1 6l5 1v4l-2 5M14 6L9 7v4l2 5" fill="none" stroke="#555" />
      </svg>
      <span dir="rtl" className="ml-[30px] shrink-0">جاهز</span>
    </div>
  );
}

function Taskbar() {
  return (
    <div className="flex h-[58px] shrink-0 items-center bg-[#03408f] text-white">
      <div className="ml-[19px] flex w-[77px] shrink-0 flex-col text-[14px] leading-[20px]">
        <span dir="rtl" className="text-left">٠٢:٠٦ م</span>
        <span className="text-[15px]">05/16/2026</span>
      </div>
      <span className="ml-[20px] w-[25px] shrink-0 text-[13px]">٥٦٪</span>
      <svg width="24" height="14" viewBox="0 0 24 14" className="ml-[4px] shrink-0">
        <rect x=".7" y=".7" width="21" height="12.600" rx="3" fill="none" stroke="#fff" strokeWidth="1.300" />
        <rect x="3" y="3" width="11" height="8" rx="1" fill="#fff" />
        <path d="M23 5v4" stroke="#fff" />
      </svg>
      <svg width="18" height="18" viewBox="0 0 18 18" className="ml-[10px] shrink-0">
        <path d="M1 6.500v5h3l5 4v-13l-5 4z" fill="#fff" />
        <path d="M11.500 6c1.500 2 1.500 4 0 6M14 4c2.500 3 2.500 7 0 10" fill="none" stroke="#fff" />
      </svg>
      <svg width="20" height="18" viewBox="0 0 20 18" className="ml-[13px] shrink-0">
        <path d="M1 6c5-6 13-6 18 0M4 9.500c3.500-4 8.500-4 12 0M7 13c2-2 4-2 6 0" fill="none" stroke="#fff" strokeWidth="1.400" />
        <circle cx="10" cy="16" r="1.500" fill="#fff" />
      </svg>
      <span className="ml-[32px] w-[10px] shrink-0 text-[17px]">ع</span>
      <svg width="12" height="8" viewBox="0 0 12 8" className="ml-[30px] shrink-0">
        <path d="M1 7l5-6 5 6" fill="none" stroke="#fff" strokeWidth="1.500" />
      </svg>

      <div className="relative ml-[266px] flex h-[50px] w-[48px] shrink-0 items-center justify-center rounded-[5px] bg-[#1a4f9a]">
        <svg width="29" height="29" viewBox="0 0 29 29">
          <rect x="7" width="22" height="29" rx="2" fill="#21a366" />
          <rect x="18" width="11" height="10" fill="#33c481" />
          <rect x="18" y="19" width="11" height="10" fill="#107c41" />
          <rect y="7" width="15" height="15" rx="1.500" fill="#185c37" />
          <path d="M4 11l6 8M10 11l-6 8" stroke="#fff" strokeWidth="1.500" />
        </svg>
        <div className="absolute bottom-[1px] left-[14px] h-[3px] w-[19px] rounded-full bg-[#4fb3ee]" />
      </div>
      <div className="relative ml-[12px] flex h-[50px] w-[35px] shrink-0 items-center justify-center">
        <Chrome size={32} />
        <div className="absolute top-[4px] left-0 h-[18px] w-[18px] rounded-full bg-[#8a8a8a]" />
        <div className="absolute top-[9px] left-[18px] h-[14px] w-[14px] rounded-full bg-[#6a6a6a]" />
        <div className="absolute bottom-[1px] left-[15px] h-[4px] w-[4px] rounded-full bg-[#9db8dc]" />
      </div>
      <div className="ml-[24px] flex h-[30px] w-[29px] shrink-0 items-center justify-center bg-[#ff0000]">
        <svg width="10" height="12" viewBox="0 0 10 12"><path d="M0 0l10 6-10 6z" fill="#fff" /></svg>
      </div>
      <svg width="30" height="30" viewBox="0 0 30 30" className="ml-[26px] shrink-0">
        <rect width="30" height="30" fill="#2a78c8" />
        <path d="M0 22l6-10 4 6 5-12 5 12 4-6 6 10v8H0z" fill="#a8dcf5" />
      </svg>
      <div className="ml-[25px] flex h-[30px] w-[29px] shrink-0 items-center justify-center bg-[#b30f0f] text-[20px] font-bold text-[#f3d9d9]">M</div>
      <div className="relative ml-[23px] flex h-[50px] w-[32px] shrink-0 items-center justify-center">
        <svg width="32" height="32" viewBox="0 0 32 32">
          <circle cx="17" cy="15" r="13" fill="none" stroke="#25d366" strokeWidth="3" />
          <path d="M6 24l-2 7 7-2z" fill="#25d366" />
          <path d="M11 10c0 6 5 11 11 11l1-3-4-2-1 2c-2-1-3-2-4-4l2-1-2-4z" fill="#25d366" />
        </svg>
        <div className="absolute top-[4px] left-0 flex h-[22px] w-[10px] items-center justify-center rounded-full bg-[#4db8f0] text-[10px] text-black">١</div>
        <div className="absolute bottom-[1px] left-[16px] h-[4px] w-[4px] rounded-full bg-[#9db8dc]" />
      </div>
      <div className="ml-[26px] flex h-[30px] w-[29px] shrink-0 items-center justify-center bg-[#ef443b]">
        <svg width="19" height="12" viewBox="0 0 19 12">
          <path d="M6 1l5 5-5 5-5-5zM13 1l5 5-5 5" fill="#fff" />
        </svg>
      </div>
      <span className="ml-[26px] shrink-0"><Chrome size={30} /></span>
      <svg width="29" height="30" viewBox="0 0 29 30" className="ml-[26px] shrink-0">
        <rect y="4" width="29" height="26" rx="3" fill="#f5f5f5" />
        <path d="M9 4c0-5 11-5 11 0" fill="none" stroke="#5bb4ea" strokeWidth="2" />
        <rect x="8" y="11" width="6" height="6" fill="#f25022" />
        <rect x="15" y="11" width="6" height="6" fill="#7fba00" />
        <rect x="8" y="18" width="6" height="6" fill="#00a4ef" />
        <rect x="15" y="18" width="6" height="6" fill="#ffb900" />
      </svg>
      <svg width="31" height="31" viewBox="0 0 31 31" className="ml-[25px] shrink-0">
        <circle cx="15.500" cy="15.500" r="15.500" fill="#1b8ad4" />
        <path d="M15 0c9 0 16 6 16 14 0 4-3 6-7 6-5 0-6-4-3-7-5-3-13 0-14 7C6 11 10 4 15 0z" fill="#5ccf7a" />
        <path d="M8 20c0 6 6 10 12 9-5 0-8-3-9-7z" fill="#0c5ea8" />
      </svg>
      <svg width="30" height="28" viewBox="0 0 30 28" className="ml-[24px] shrink-0">
        <path d="M0 2h11l3 3h16v23H0z" fill="#f6c945" />
        <rect x="8" y="16" width="14" height="12" rx="1" fill="#1a7fc4" />
      </svg>
      <div className="relative ml-[25px] h-[30px] w-[30px] shrink-0">
        <div className="absolute right-0 top-0 h-[20px] w-[22px] bg-[#ececec]" />
        <div className="absolute bottom-0 left-0 h-[20px] w-[20px] bg-[#555]" />
      </div>
      <div className="ml-[15px] flex h-[40px] w-[273px] shrink-0 items-center rounded-[20px] bg-[#2a5ba0] pl-[6px]">
        <svg width="62" height="34" viewBox="0 0 62 34" className="shrink-0">
          <ellipse cx="31" cy="17" rx="31" ry="17" fill="#bcd7e5" />
          <path d="M20 34c-2-12 4-26 14-26s14 12 24 26z" fill="#c97a3a" />
          <path d="M0 24c8-6 16-4 24 0v10H4z" fill="#5a7a3a" />
          <path d="M6 30c12-4 26-4 44 0-12 4-32 4-44 0z" fill="#e4dcb8" />
        </svg>
        <span dir="rtl" className="ml-[119px] flex w-[39px] shrink-0 justify-center text-[20px]">بحث</span>
        <svg width="18" height="18" viewBox="0 0 18 18" className="ml-[16px] shrink-0">
          <circle cx="8" cy="7.500" r="6.500" fill="none" stroke="#fff" strokeWidth="1.500" />
          <path d="M12 12l5 5.500" stroke="#fff" strokeWidth="1.500" />
        </svg>
      </div>
      <div className="ml-[18px] grid h-[29px] w-[29px] shrink-0 grid-cols-2 gap-[1px]">
        <div className="bg-[#4cc2ff]" />
        <div className="bg-[#4cc2ff]" />
        <div className="bg-[#4cc2ff]" />
        <div className="bg-[#4cc2ff]" />
      </div>
      <div className="ml-[407px] flex w-[125px] shrink-0 flex-col text-right text-[15px] leading-[20px]">
        <span dir="rtl" className="whitespace-nowrap">درجات الحرارة تنخف...</span>
        <span dir="rtl" className="text-[13px]">غداً</span>
      </div>
      <svg width="23" height="40" viewBox="0 0 23 40" className="ml-[6px] shrink-0">
        <circle cx="10" cy="10" r="10" fill="#ff9d9d" />
        <path d="M10 4v9" stroke="#7a1c1c" strokeWidth="1.500" />
        <path d="M5 24v8a5 5 0 1 0 7 0v-8" fill="none" stroke="#9dc9ef" strokeWidth="1.500" />
        <circle cx="8.500" cy="35" r="3.500" fill="#3f9be0" />
        <path d="M20 18v10m-2-3l2 3 2-3" fill="none" stroke="#3f9be0" />
      </svg>
    </div>
  );
}

export default function App() {
  return (
    <div className="relative flex h-[1438px] w-[2153px] flex-col overflow-hidden bg-[#f0f0f0] [font-family:'Liberation_Sans','DejaVu_Sans_Condensed','DejaVu_Sans',sans-serif]">
      <Header />
      <TabRow />
      <Ribbon />
      <FormulaBar />
      <div className="flex h-[1056px] shrink-0">
        <VScroll />
        <Sheet />
      </div>
      <TabsBar />
      <StatusBar />
      <Taskbar />
      {/* mostaql watermark */}
      <div className="pointer-events-none absolute top-[1284px] left-[947px] z-20 flex w-[258px] flex-col items-center text-[#aaaaaa] opacity-40">
        <span dir="rtl" className="text-[84px] leading-[84px] font-bold">مستقل</span>
        <span className="text-[43px] leading-[40px] font-bold">mostaql.com</span>
      </div>
    </div>
  );
}
